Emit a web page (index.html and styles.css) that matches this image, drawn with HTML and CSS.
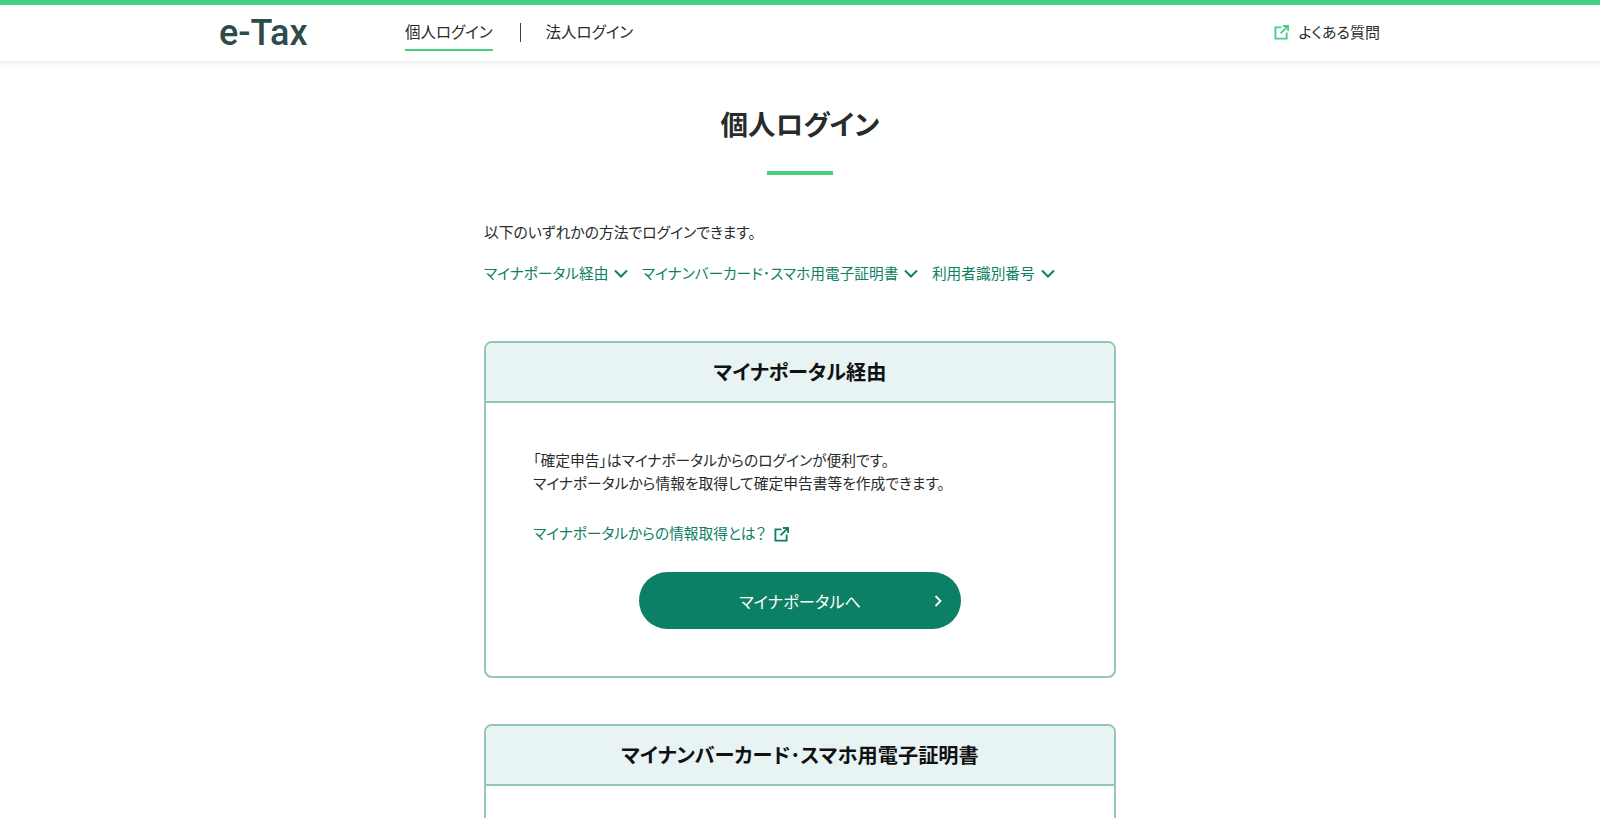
FILE: index.html
```html
<!DOCTYPE html>
<html lang="ja">
<head>
    <meta charset="UTF-8">
    <meta name="viewport" content="width=device-width, initial-scale=1.0">
    <title>個人ログイン | e-Tax</title>
    <link rel="stylesheet" href="styles.css">
</head>
<body>
    <header class="header">
        <div class="header-inner">
            <a class="logo" href="#">e-Tax</a>
            <nav class="nav">
                <a class="nav-item nav-current" href="#">個人ログイン</a>
                <span class="nav-sep"></span>
                <a class="nav-item" href="#">法人ログイン</a>
            </nav>
            <a class="faq" href="#">
                <svg class="ext-icon faq-icon" viewBox="0 0 16 16"><path d="M8 2.5H1.5v12h12V8M9.5 1H15v5.5M15 1 7 9"/></svg>
                よくある質問
            </a>
        </div>
    </header>

    <main class="main">
        <h1 class="title">個人ログイン</h1>
        <p class="intro">以下のいずれかの方法でログインできます。</p>
        <div class="anchors">
            <a class="anchor" href="#">マイナポータル経由<svg class="chevron" viewBox="0 0 14 9"><path d="M1 1.5l6 6 6-6"/></svg></a>
            <a class="anchor" href="#">マイナンバーカード･スマホ用電子証明書<svg class="chevron" viewBox="0 0 14 9"><path d="M1 1.5l6 6 6-6"/></svg></a>
            <a class="anchor" href="#">利用者識別番号<svg class="chevron" viewBox="0 0 14 9"><path d="M1 1.5l6 6 6-6"/></svg></a>
        </div>

        <section class="card">
            <h2 class="card-head">マイナポータル経由</h2>
            <div class="card-body">
                <p class="card-text">「確定申告」はマイナポータルからのログインが便利です。<br>マイナポータルから情報を取得して確定申告書等を作成できます。</p>
                <a class="card-link" href="#">マイナポータルからの情報取得とは？<svg class="ext-icon link-icon" viewBox="0 0 16 16"><path d="M8 2.5H1.5v12h12V8M9.5 1H15v5.5M15 1 7 9"/></svg></a>
                <a class="btn" href="#">マイナポータルへ<svg class="btn-arrow" viewBox="0 0 8 12"><path d="M1.5 1l5 5-5 5"/></svg></a>
            </div>
        </section>

        <section class="card">
            <h2 class="card-head">マイナンバーカード･スマホ用電子証明書</h2>
            <div class="card-body"></div>
        </section>
    </main>
</body>
</html>
```

FILE: styles.css
```css
html, body {
    height: 100%;
    overflow: hidden;
}

body {
    margin: 0;
    background-color: #fff;
    color: #262c2c;
    font-family: "Noto Sans CJK JP", "Noto Sans", sans-serif;
    font-feature-settings: "palt";
}

a {
    color: inherit;
    text-decoration: none;
}

.header {
    height: 56px;
    border-top: 5px solid #48cf86;
    background-color: #fff;
    box-shadow: 0 2px 4px rgba(60, 100, 90, 0.12);
}

.header-inner {
    display: flex;
    align-items: stretch;
    width: 1162px;
    height: 100%;
    margin: 0 auto;
}

.logo {
    width: 186px;
    padding-top: 5px;
    color: #2c4c4b;
    font-family: "Roboto", sans-serif;
    font-size: 36px;
    font-weight: 500;
    line-height: 46px;
}

.nav {
    display: flex;
    align-items: flex-start;
    flex: 1;
}

.nav-item {
    height: 46px;
    box-sizing: border-box;
    padding-top: 15px;
    font-size: 15.5px;
    line-height: 22px;
}

.nav-current {
    border-bottom: 2px solid #48cf86;
}

.nav-sep {
    width: 1px;
    height: 19px;
    margin: 18px 25px 0 27px;
    background-color: #3a4444;
}

.faq {
    display: flex;
    align-items: center;
    gap: 10px;
    height: 22px;
    margin: 15px 1px 0 0;
    font-size: 15px;
}

.ext-icon path {
    fill: none;
    stroke-width: 2;
}

.faq-icon {
    width: 15px;
    height: 15px;
    margin-top: 2px;
    stroke: #48cf86;
}

.main {
    width: 632px;
    margin: 0 auto;
}

.title {
    margin: 41px 0 0;
    padding-bottom: 30px;
    font-size: 27.5px;
    font-weight: 700;
    line-height: 42px;
    text-align: center;
}

.title::after {
    content: "";
    display: block;
    width: 66px;
    height: 4px;
    margin: 27px auto 0;
    background-color: #48cf86;
}

.intro {
    margin: 15px 0 0;
    font-size: 14.8px;
    line-height: 24px;
}

.anchors {
    display: flex;
    gap: 14px;
    margin-top: 17px;
    color: #0d8065;
    font-size: 14.7px;
    line-height: 24px;
}

.anchor {
    display: flex;
    align-items: center;
    gap: 6px;
}

.chevron {
    width: 14px;
    height: 9px;
    margin-right: -0.5px;
}

.chevron path {
    fill: none;
    stroke: #0d8065;
    stroke-width: 2;
}

.card {
    margin-top: 46px;
    overflow: hidden;
    border: 2px solid #94c5b8;
    border-radius: 8px;
}

.card:first-of-type {
    margin-top: 56px;
}

.card-head {
    margin: 0;
    height: 58px;
    border-bottom: 2px solid #94c5b8;
    background-color: #e7f4f3;
    color: #111;
    font-size: 20.2px;
    font-weight: 700;
    line-height: 58px;
    text-align: center;
}

.card-body {
    padding: 45px 47px 47px;
}

.card-text {
    margin: 0;
    font-size: 14.75px;
    line-height: 23px;
}

.card-link {
    display: flex;
    align-items: center;
    gap: 8px;
    margin-top: 27px;
    color: #0d8065;
    font-size: 14.7px;
    line-height: 24px;
}

.link-icon {
    width: 15px;
    height: 15px;
    margin-top: 2px;
    stroke: #0d8065;
}

.btn {
    display: flex;
    position: relative;
    align-items: center;
    justify-content: center;
    width: 322px;
    height: 57px;
    margin: 27px auto 0;
    border-radius: 29px;
    background-color: #0b8064;
    color: #fff;
    font-size: 16.3px;
}

.btn-arrow {
    position: absolute;
    top: 23px;
    right: 19px;
    width: 8px;
    height: 12px;
}

.btn-arrow path {
    fill: none;
    stroke: #fff;
    stroke-width: 1.8;
}
```
